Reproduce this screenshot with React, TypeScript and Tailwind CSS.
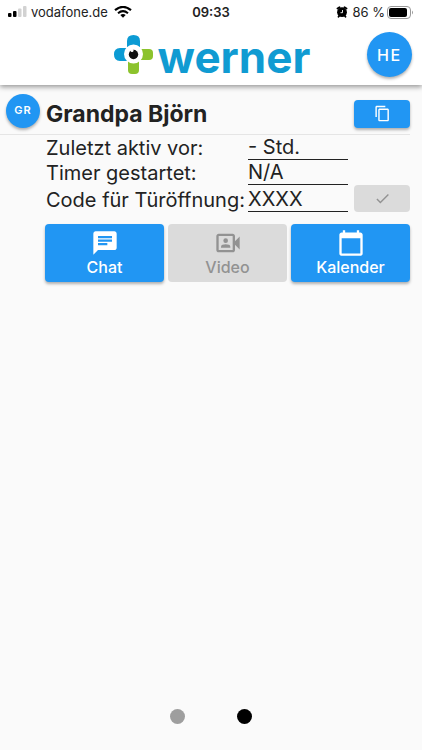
import { MdCalendarToday, MdChat, MdCheck, MdContentCopy, MdOutlineVideoCameraFront } from "react-icons/md";
import type { ReactNode } from "react";

const raised = "bg-[#2196f3] text-white shadow-[0_2px_3px_rgba(0,0,0,0.3)]";
const disabled = "bg-[#dbdbdb] text-[#929292]";
const tile = "flex h-[58px] flex-col items-center justify-center rounded";

function StatusBar() {
  return (
    <div className="grid h-6 grid-cols-[1fr_auto_1fr] items-center pr-2 pl-2 text-[13px] leading-4 text-[#222]">
      <div className="flex items-center">
        <svg className="mr-1 h-3 w-[19px]" viewBox="0 0 19 12" aria-hidden="true">
          <rect x="0" y="7" width="3.500" height="4" rx="1" fill="#000" />
          <rect x="5" y="5" width="3.500" height="6" rx="1" fill="#000" />
          <rect x="10" y="2.500" width="3.500" height="8.500" rx="1" fill="#d2d2d2" />
          <rect x="15" y="0" width="3.500" height="11" rx="1" fill="#d2d2d2" />
        </svg>
        <span>vodafone.de</span>
        <svg className="ml-[6px] h-3 w-[18px]" viewBox="0 0 18 12" fill="none" stroke="#000" aria-hidden="true">
          <path d="M1 4.200Q9-2.400 17 4.200" strokeWidth="2.200" />
          <path d="M4 7.200Q9 3 14 7.200" strokeWidth="2" />
          <path d="M6.300 9Q9 7 11.700 9L9 11.700Z" fill="#000" stroke="none" />
        </svg>
      </div>
      <span className="font-semibold">09:33</span>
      <div className="flex items-center justify-end">
        <svg className="mr-1 h-3 w-3" viewBox="0 0 12 12" aria-hidden="true">
          <path d="M1.500 2.500L3.500 1.200M10.500 2.500L8.500 1.200M2.500 10.800L3.500 9.500M9.500 10.800L8.500 9.500" stroke="#000" strokeWidth="1.800" strokeLinecap="round" />
          <circle cx="6" cy="6.200" r="4.900" fill="#000" />
          <path d="M6.500 4V6.700H4.500" stroke="#fff" strokeWidth="0.900" fill="none" />
        </svg>
        <span>86 %</span>
        <svg className="ml-[2px] h-[13px] w-[27px]" viewBox="0 0 27 13" aria-hidden="true">
          <rect x="0.500" y="0.500" width="23" height="12" rx="3.500" fill="#fff" stroke="#999" />
          <rect x="2" y="2" width="18" height="9" rx="2" fill="#000" />
          <path d="M25 4.500Q27 6.500 25 8.500Z" fill="#999" />
        </svg>
      </div>
    </div>
  );
}

function Logo() {
  return (
    <div className="flex items-center gap-1 pl-3">
      <svg className="h-10 w-10" viewBox="0 0 40 40" aria-hidden="true">
        <path d="M13 13V6Q13 0 19.500 0T26 6V13Z" fill="#0c9bd4" />
        <path d="M13 13H6Q0 13 0 19.500T6 26H13Z" fill="#0c9bd4" />
        <path d="M26 14H35Q39 14 39 18V21Q39 25 35 25H26Z" fill="#8cc32d" />
        <path d="M14 25H25V35Q25 39 21 39H18Q14 39 14 35Z" fill="#8cc32d" />
        <circle cx="19.500" cy="19" r="9.500" fill="#fff" />
        <circle cx="19.500" cy="19.500" r="4.700" fill="#111" />
        <circle cx="18" cy="15.500" r="1.500" fill="#fff" />
      </svg>
      <span className="pt-1 text-[44px] leading-[44px] font-bold text-[#109bd2]">werner</span>
    </div>
  );
}

function Field({ id, label, value, children }: { id: string; label: string; value: string; children?: ReactNode }) {
  return (
    <div className="grid grid-cols-[198px_1fr_56px] items-end gap-x-1">
      <label htmlFor={id} className="text-xl leading-6 whitespace-nowrap">{label}</label>
      <input id={id} readOnly defaultValue={value} className="mr-[2px] h-[25px] min-w-0 border-b border-[#222] bg-transparent text-xl leading-6 outline-none" />
      {children}
    </div>
  );
}

export default function App() {
  return (
    <div className="flex min-h-screen flex-col bg-[#fafafa] font-['Inter',sans-serif] text-[#222]">
      <header className="relative bg-white shadow-[0_2px_5px_rgba(0,0,0,0.4)]">
        <StatusBar />
        <div className="grid h-[61px] grid-cols-[1fr_auto_1fr] items-center pr-[10px]">
          <span />
          <Logo />
          <button className={`size-[45px] justify-self-end rounded-full text-base font-medium tracking-widest ${raised}`}>HE</button>
        </div>
      </header>
      <main className="flex-1 pr-3">
        <div className="flex h-[50px] items-center border-b border-[#e5e5e5] pt-2 pl-[6px]">
          <button className={`mr-[6px] mb-[6px] size-[34px] rounded-full text-[11px] font-semibold tracking-widest ${raised}`}>GR</button>
          <h1 className="flex-1 text-[23px] leading-7 font-bold">Grandpa Björn</h1>
          <button aria-label="Kopieren" className={`flex h-7 w-14 items-center justify-center rounded ${raised}`}>
            <MdContentCopy size={17} />
          </button>
        </div>
        <div className="pl-[46px]">
          <Field id="active" label="Zuletzt aktiv vor:" value="- Std." />
          <Field id="timer" label="Timer gestartet:" value="N/A" />
          <Field id="code" label="Code für Türöffnung:" value="XXXX">
            <button disabled aria-label="Bestätigen" className={`flex h-[27px] items-center justify-center rounded ${disabled}`}>
              <MdCheck size={17} />
            </button>
          </Field>
        </div>
        <div className="grid grid-cols-3 gap-1 pt-3 pl-[45px] text-base leading-5 font-medium">
          <button className={`${tile} ${raised}`}><MdChat size={28} />Chat</button>
          <button disabled className={`${tile} ${disabled}`}><MdOutlineVideoCameraFront size={28} />Video</button>
          <button className={`${tile} ${raised}`}><MdCalendarToday size={28} />Kalender</button>
        </div>
      </main>
      <nav aria-label="Seiten" className="flex justify-center gap-[52px] pb-[26px]">
        <button aria-label="Seite 1" className="size-[15px] rounded-full bg-[#9e9e9e]" />
        <button aria-label="Seite 2" className="size-[15px] rounded-full bg-black" />
      </nav>
    </div>
  );
}
